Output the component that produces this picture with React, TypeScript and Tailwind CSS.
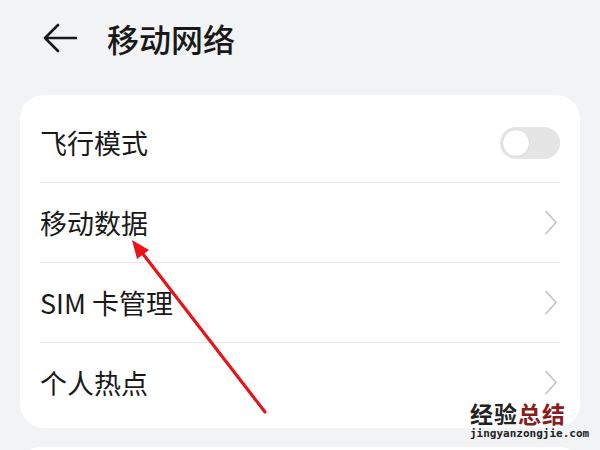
const ROWS = [
  { label: '飞行模式', toggle: true },
  { label: '移动数据' },
  { label: 'SIM 卡管理' },
  { label: '个人热点' },
];

const font = { fontFamily: '"Noto Sans CJK SC", "Noto Sans", sans-serif' };

function Toggle() {
  return (
    <div className="w-[60px] h-[32px] rounded-full bg-[#e5e5e5] flex items-center px-[2px]">
      <div className="w-[28px] h-[28px] rounded-full bg-white border border-[#d9d9d9]" />
    </div>
  );
}

function Chevron() {
  return (
    <svg width="14" height="25" viewBox="0 0 14 25" fill="none" className="text-[#c6c6c6] mr-[2px]">
      <path d="M2 1.5l10 11-10 11" stroke="currentColor" strokeWidth="1.8" strokeLinecap="round" strokeLinejoin="round" />
    </svg>
  );
}

export default function App() {
  return (
    <div className="relative w-[600px] h-[450px] overflow-hidden bg-[#f1f3f5] text-[#191919]" style={font}>
      {/* Header */}
      <div className="h-[75px] flex items-center pl-[43px]">
        <svg width="34" height="30" viewBox="0 0 34 30" fill="none" className="text-[#191919]">
          <path d="M33 15H2M15 2L2 15l13 13" stroke="currentColor" strokeWidth="2.6" strokeLinecap="round" strokeLinejoin="round" />
        </svg>
        <h1 className="ml-[30px] text-[32px] font-medium leading-none">移动网络</h1>
      </div>

      {/* Settings card */}
      <div className="mx-[20px] mt-[20px] rounded-[24px] bg-white px-[20px] pt-[8px] pb-[6px]">
        {ROWS.map((r, i) => (
          <div key={r.label}>
            {i > 0 && <div className="h-px bg-[#e8e8e8]" />}
            <div className="h-[79px] flex items-center justify-between">
              <span className="text-[27px] leading-none">{r.label}</span>
              {r.toggle ? <Toggle /> : <Chevron />}
            </div>
          </div>
        ))}
      </div>
      <div className="mx-[20px] mt-[19px] h-[40px] rounded-[24px] bg-white" />

      {/* Red annotation arrow */}
      <svg className="absolute left-0 top-0" width="600" height="450" viewBox="0 0 600 450">
        <line x1="265" y1="412" x2="143" y2="254" stroke="#e8141a" strokeWidth="3.2" strokeLinecap="round" />
        <polygon points="132,240 149,250 137,259" fill="#e8141a" />
      </svg>

      {/* Watermark */}
      <div className="absolute left-[470px] top-[402px] flex flex-col items-start">
        <div className="text-[23px] font-bold leading-none tracking-[1px]">
          <span className="text-[#222]">经验</span>
          <span className="text-[#8b1c1c]">总结</span>
        </div>
        <div className="mt-[3px] text-[11px] font-bold leading-none text-[#222]" style={{ fontFamily: '"DejaVu Sans Mono", monospace' }}>
          jingyanzongjie.com
        </div>
      </div>
    </div>
  );
}
